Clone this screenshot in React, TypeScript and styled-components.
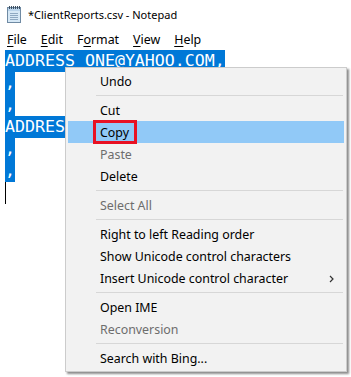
import React from "react";
import styled, { createGlobalStyle } from "styled-components";

const GlobalStyle = createGlobalStyle`
  html, body {
    margin: 0;
    padding: 0;
    background: #ffffff;
  }
`;

const uiFont = `"Noto Sans", "Open Sans", Arial, sans-serif`;

const Window = styled.div`
  position: relative;
  width: 351px;
  height: 377px;
  overflow: hidden;
  background: #ffffff;
  font-family: ${uiFont};
`;

const TitleBar = styled.div`
  height: 28px;
  display: flex;
  align-items: center;
  padding-left: 7px;
  gap: 7px;
  font-size: 11px;
  color: #000;
`;

const MenuBar = styled.div`
  height: 22px;
  display: flex;
  align-items: center;
  padding-left: 0;
  font-size: 12.4px;
  color: #000;
`;

const MenuBarItem = styled.span`
  padding: 0 7px;
`;

const Key = styled.span`
  text-decoration: underline;
  text-underline-offset: 2px;
`;

const Editor = styled.div`
  padding-left: 5px;
  font-family: "DejaVu Sans Mono", "Liberation Mono", monospace;
  font-size: 16.6px;
  line-height: 22px;
  color: #000;
`;

const Line = styled.div`
  height: 22px;
  white-space: pre;
`;

const Selected = styled.span`
  display: inline-block;
  height: 22px;
  background: #0078d7;
  color: #ffffff;
`;

const Caret = styled.div`
  width: 1px;
  height: 22px;
  background: #000;
`;

const ContextMenu = styled.div`
  position: absolute;
  left: 65px;
  top: 67px;
  width: 282px;
  padding: 2px;
  box-sizing: border-box;
  background: #f2f2f2;
  border: 1px solid #cccccc;
  box-shadow: 2px 2px 2px rgba(0, 0, 0, 0.45);
  font-size: 12.4px;
`;

const Item = styled.div<{ disabled?: boolean; active?: boolean }>`
  position: relative;
  height: 22px;
  display: flex;
  align-items: center;
  padding-left: 32px;
  color: ${(p) => (p.disabled ? "#6d6d6d" : "#000000")};
  background: ${(p) => (p.active ? "#91c9f7" : "transparent")};
`;

const Separator = styled.div`
  height: 1px;
  margin: 3px 1px 3px 28px;
  background: #d7d7d7;
`;

const Arrow = styled.svg`
  position: absolute;
  right: 10px;
  top: 8px;
`;

const Mark = styled.div`
  position: absolute;
  left: 25px;
  top: -1px;
  width: 44px;
  height: 24px;
  box-sizing: border-box;
  border: 3px solid #e81123;
`;

const NotepadIcon = () => (
  <svg width="14" height="17" viewBox="0 0 14 17">
    <rect x="0.5" y="1.5" width="13" height="15" fill="#d6e8f6" stroke="#6f8aa3" />
    <rect x="1" y="2" width="12" height="3" fill="#b9d3ea" />
    {[2, 4, 6, 8, 10, 12].map((x) => (
      <rect key={x} x={x} y="0" width="1" height="3" fill="#3c4f63" />
    ))}
    {[7, 9, 11, 13].map((y) => (
      <rect key={y} x="3" y={y} width="8" height="1" fill="#8fa9c2" />
    ))}
  </svg>
);

type Entry = { label?: string; disabled?: boolean; active?: boolean; sub?: boolean; sep?: boolean };

const entries: Entry[] = [
  { label: "Undo" },
  { sep: true },
  { label: "Cut" },
  { label: "Copy", active: true },
  { label: "Paste", disabled: true },
  { label: "Delete" },
  { sep: true },
  { label: "Select All", disabled: true },
  { sep: true },
  { label: "Right to left Reading order" },
  { label: "Show Unicode control characters" },
  { label: "Insert Unicode control character", sub: true },
  { sep: true },
  { label: "Open IME" },
  { label: "Reconversion", disabled: true },
  { sep: true },
  { label: "Search with Bing..." },
];

// line 4 continues under the context menu; only the visible part is kept
const lines = ["ADDRESS ONE@YAHOO.COM,", ",", ",", "ADDRES", ",", ","];

export default function App() {
  return (
    <Window>
      <GlobalStyle />
      <TitleBar>
        <NotepadIcon />
        <span>*ClientReports.csv - Notepad</span>
      </TitleBar>
      <MenuBar>
        <MenuBarItem>
          <Key>F</Key>ile
        </MenuBarItem>
        <MenuBarItem>
          <Key>E</Key>dit
        </MenuBarItem>
        <MenuBarItem>
          F<Key>o</Key>rmat
        </MenuBarItem>
        <MenuBarItem>
          <Key>V</Key>iew
        </MenuBarItem>
        <MenuBarItem>
          <Key>H</Key>elp
        </MenuBarItem>
      </MenuBar>
      <Editor>
        {lines.map((l, i) => (
          <Line key={i}>
            <Selected>{l}</Selected>
          </Line>
        ))}
        <Caret />
      </Editor>
      <ContextMenu>
        {entries.map((e, i) =>
          e.sep ? (
            <Separator key={i} />
          ) : (
            <Item key={i} disabled={e.disabled} active={e.active}>
              {e.label}
              {e.active && <Mark />}
              {e.sub && (
                <Arrow width="5" height="8" viewBox="0 0 5 8">
                  <path d="M1 1 L4 4 L1 7" fill="none" stroke="#333" strokeWidth="1.2" />
                </Arrow>
              )}
            </Item>
          )
        )}
      </ContextMenu>
    </Window>
  );
}
